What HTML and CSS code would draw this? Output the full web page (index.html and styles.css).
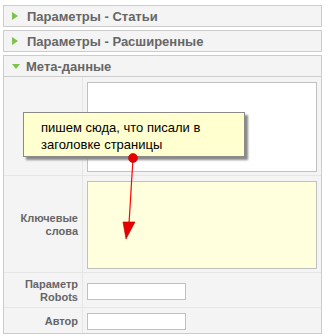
FILE: index.html
```html
<!DOCTYPE html>
<html lang="ru">
<head>
  <meta charset="UTF-8" />
  <title>Мета-данные</title>
  <link rel="stylesheet" href="styles.css">
</head>
<body>
  <div class="pane">
    <div class="panel">
      <h3 class="title"><span class="arrow right"></span>Параметры - Статьи</h3>
    </div>
    <div class="panel">
      <h3 class="title"><span class="arrow right"></span>Параметры - Расширенные</h3>
    </div>
    <div class="panel open">
      <h3 class="title"><span class="arrow down"></span>Мета-данные</h3>
      <table class="paramlist">
        <tr>
          <td class="key"></td>
          <td class="field"><textarea class="area desc"></textarea></td>
        </tr>
        <tr>
          <td class="key">Ключевые<br>слова</td>
          <td class="field"><textarea class="area keys"></textarea></td>
        </tr>
        <tr>
          <td class="key">Параметр<br>Robots</td>
          <td class="field"><input type="text" class="text"></td>
        </tr>
        <tr>
          <td class="key">Автор</td>
          <td class="field"><input type="text" class="text"></td>
        </tr>
      </table>
    </div>

    <div class="callout">пишем сюда, что писали в<br>заголовке страницы</div>
    <svg class="pointer" width="328" height="336" viewBox="0 0 328 336">
      <line x1="133" y1="158" x2="129" y2="224" stroke="#f00" stroke-width="1.2"/>
      <polygon points="123,222 135,222 126,239" fill="#e80000" stroke="#b00000" stroke-width="0.6"/>
      <circle cx="133" cy="158" r="4.5" fill="#e80000" stroke="#c00000" stroke-width="0.6"/>
    </svg>
  </div>
</body>
</html>
```

FILE: styles.css
```css
* { margin: 0; padding: 0; box-sizing: border-box; }
body {
  font-family: "Liberation Sans", Arial, sans-serif;
  background: #fff;
}
.pane {
  position: relative;
  width: 328px;
  height: 336px;
  padding: 5px 6px 0 3px;
}
.panel {
  border: 1px solid #ccc;
  background: #f4f4f4;
  margin-bottom: 3px;
}
.title {
  display: flex;
  align-items: center;
  height: 20px;
  font-size: 13px;
  font-weight: bold;
  color: #666;
}
.open .title { border-bottom: 1px solid #ccc; height: 21px; }
.arrow { width: 0; height: 0; }
.arrow.right {
  border-left: 6px solid #7dc24b;
  border-top: 4px solid transparent;
  border-bottom: 4px solid transparent;
  margin: 0 9px 0 8px;
}
.arrow.down {
  border-top: 5px solid #7dc24b;
  border-left: 4.5px solid transparent;
  border-right: 4.5px solid transparent;
  margin: 1px 6px 0 8px;
}
.paramlist {
  width: 100%;
  border-collapse: collapse;
}
.paramlist td {
  border-bottom: 1px solid #e6e6e6;
  padding: 5px 4px 3px;
  vertical-align: middle;
}
.paramlist tr:last-child td { border-bottom: none; }
.key {
  width: 79px;
  border-right: 1px solid #e6e6e6;
  text-align: right;
  font-size: 11px;
  font-weight: bold;
  line-height: 13px;
  color: #666;
}
.area {
  display: block;
  width: 230px;
  border: 1px solid #c0c0c0;
  resize: none;
}
.desc { height: 90px; background: #fff; }
.keys { height: 88px; background: #ffffdd; }
.text {
  display: block;
  width: 99px;
  height: 17px;
  border: 1px solid #c0c0c0;
  background: #fff;
}
.callout {
  position: absolute;
  left: 23px;
  top: 112px;
  width: 222px;
  height: 45px;
  padding: 6px 0 0 17px;
  background: #ffffcf;
  border: 1px solid #8a8a8a;
  box-shadow: 3px 3px 2px #8a8a8a;
  font-size: 13px;
  line-height: 17px;
  color: #000;
}
.pointer {
  position: absolute;
  left: 0;
  top: 0;
}
```
